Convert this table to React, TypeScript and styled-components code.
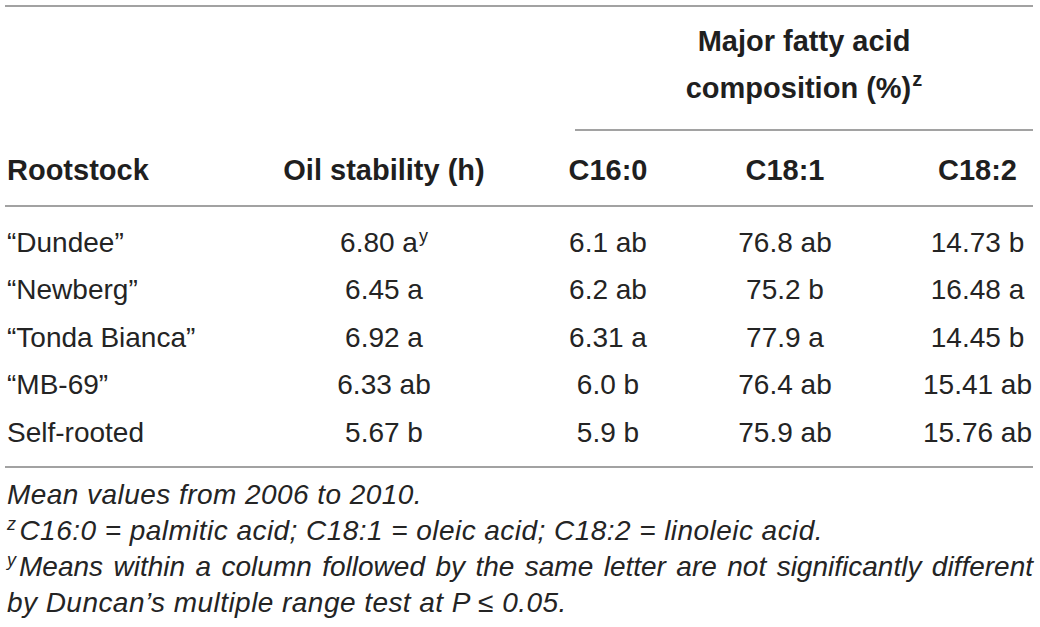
import styled, { createGlobalStyle } from 'styled-components';

const GlobalStyle = createGlobalStyle`
  html, body {
    margin: 0;
    padding: 0;
    background: #ffffff;
  }
  body {
    font-family: 'Liberation Sans', Arial, Helvetica, sans-serif;
    color: #242424;
  }
`;

interface IRow {
  name: string;
  oil: string;
  oilSup?: string;
  c16: string;
  c181: string;
  c182: string;
}

const rows: IRow[] = [
  { name: '“Dundee”', oil: '6.80 a', oilSup: 'y', c16: '6.1 ab', c181: '76.8 ab', c182: '14.73 b' },
  { name: '“Newberg”', oil: '6.45 a', c16: '6.2 ab', c181: '75.2 b', c182: '16.48 a' },
  { name: '“Tonda Bianca”', oil: '6.92 a', c16: '6.31 a', c181: '77.9 a', c182: '14.45 b' },
  { name: '“MB-69”', oil: '6.33 ab', c16: '6.0 b', c181: '76.4 ab', c182: '15.41 ab' },
  { name: 'Self-rooted', oil: '5.67 b', c16: '5.9 b', c181: '75.9 ab', c182: '15.76 ab' },
];

// 컬럼 폭: 각 컬럼 중앙이 원본과 맞도록 잡음
const COLUMNS = '195px 368px 80px 274px 111px';

function App() {
  return (
    <>
      <GlobalStyle />
      <Wrapper>
        <Table>
          <GroupRow>
            <GroupHead>
              Major fatty acid
              <br />
              composition (%)<HeadSup>z</HeadSup>
            </GroupHead>
          </GroupRow>
          <HeadRow>
            <HeadCell align="left">Rootstock</HeadCell>
            <HeadCell>Oil stability (h)</HeadCell>
            <HeadCell>C16:0</HeadCell>
            <HeadCell>C18:1</HeadCell>
            <HeadCell>C18:2</HeadCell>
          </HeadRow>
          <Body>
            {rows.map((row) => (
              <BodyRow key={row.name}>
                <Cell align="left">{row.name}</Cell>
                <Cell>
                  {row.oil}
                  {row.oilSup && <CellSup>{row.oilSup}</CellSup>}
                </Cell>
                <Cell>{row.c16}</Cell>
                <Cell>{row.c181}</Cell>
                <Cell>{row.c182}</Cell>
              </BodyRow>
            ))}
          </Body>
        </Table>
        <Notes>
          <Note>Mean values from 2006 to 2010.</Note>
          <Note>
            <NoteSup>z</NoteSup>C16:0 = palmitic acid; C18:1 = oleic acid; C18:2 = linoleic acid.
          </Note>
          <Note justify>
            <NoteSup>y</NoteSup>Means within a column followed by the same letter are not significantly different
          </Note>
          <Note>by Duncan’s multiple range test at P ≤ 0.05.</Note>
        </Notes>
      </Wrapper>
    </>
  );
}

export default App;

const Wrapper = styled.div`
  width: 1028px;
  margin: 5px 0 0 5px;
`;

const Table = styled.div`
  display: flex;
  flex-direction: column;
  border-top: 2px solid #a2a2a2;
`;

const GroupRow = styled.div`
  display: grid;
  grid-template-columns: ${COLUMNS};
  padding-top: 10.5px;
`;

const GroupHead = styled.div`
  grid-column: 3 / -1;
  margin-left: 7px;
  padding-bottom: 17.5px;
  border-bottom: 2px solid #a2a2a2;
  text-align: center;
  font-size: 29px;
  font-weight: 700;
  line-height: 47px;
  color: #1f1f1f;
`;

const HeadRow = styled.div`
  display: grid;
  grid-template-columns: ${COLUMNS};
  padding: 15.5px 0 11.5px 0;
  border-bottom: 2px solid #a2a2a2;
`;

const HeadCell = styled.div<{ align?: 'left' | 'center' }>`
  text-align: ${(props) => props.align || 'center'};
  padding-left: ${(props) => (props.align === 'left' ? '2px' : '0')};
  font-size: 29px;
  font-weight: 700;
  line-height: 47px;
  white-space: nowrap;
  color: #1f1f1f;
`;

const HeadSup = styled.span`
  font-size: 20px;
  vertical-align: 12px;
  line-height: 0;
  margin-left: 1px;
`;

const Body = styled.div`
  display: flex;
  flex-direction: column;
  padding: 11.6px 0 9.9px 0;
  border-bottom: 2px solid #a2a2a2;
`;

const BodyRow = styled.div`
  display: grid;
  grid-template-columns: ${COLUMNS};
`;

const Cell = styled.div<{ align?: 'left' | 'center' }>`
  text-align: ${(props) => props.align || 'center'};
  padding-left: ${(props) => (props.align === 'left' ? '2px' : '0')};
  font-size: 28px;
  line-height: 47.5px;
  white-space: nowrap;
`;

const CellSup = styled.span`
  font-size: 18px;
  line-height: 0;
  vertical-align: 10px;
  margin-left: 1px;
`;

const Notes = styled.div`
  padding-top: 9px;
`;

const Note = styled.div<{ justify?: boolean }>`
  padding-left: 2px;
  font-size: 28px;
  font-style: italic;
  line-height: 36px;
  letter-spacing: ${(props) => (props.justify ? '0' : '0.45px')};
  white-space: nowrap;
  text-align: ${(props) => (props.justify ? 'justify' : 'left')};
  text-align-last: ${(props) => (props.justify ? 'justify' : 'auto')};
`;

const NoteSup = styled.span`
  font-size: 18px;
  vertical-align: 10px;
  line-height: 0;
  margin-right: 3px;
`;
